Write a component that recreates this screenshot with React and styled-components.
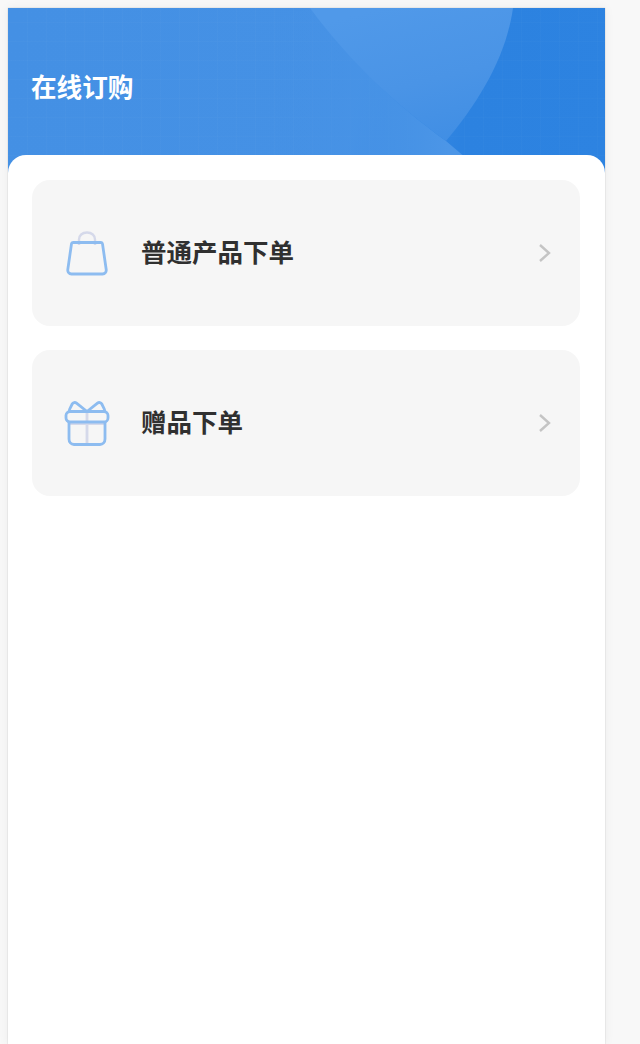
import React from 'react';
import styled, { createGlobalStyle } from 'styled-components';

const GlobalStyle = createGlobalStyle`
    html, body {
        margin: 0;
        padding: 0;
        background: #f8f8f8;
    }

    body {
        padding: 8px 35px 0 8px;
        height: 1044px;
        box-sizing: border-box;
        overflow: hidden;
        font-family: "Noto Sans CJK SC", "Liberation Sans", sans-serif;
    }
`;

const Page = styled.div`
    height: 1036px;
    background: #fff;
    box-shadow: 0 0 1px rgba(0, 0, 0, 0.25), 0 0 10px rgba(0, 0, 0, 0.06);
    overflow: hidden;
`;

const Header = styled.header`
    position: relative;
    height: 167px;
    padding: 0 23px 12px;
    box-sizing: border-box;
    display: flex;
    align-items: center;
    overflow: hidden;
    background:
        repeating-linear-gradient(90deg, rgba(255, 255, 255, 0.015) 0 1px, transparent 1px 19px),
        repeating-linear-gradient(0deg, rgba(255, 255, 255, 0.015) 0 1px, transparent 1px 19px),
        linear-gradient(100deg, #4490e4 0%, #4591e5 58%, #2c82e0 76%, #2d83e1 100%);
`;

const Decoration = styled.svg`
    position: absolute;
    inset: 0;
    width: 100%;
    height: 100%;
`;

const Title = styled.h1`
    position: relative;
    margin: 0;
    font-size: 25.6px;
    line-height: 36px;
    font-weight: 700;
    color: #fff;
`;

const Body = styled.main`
    position: relative;
    margin-top: -20px;
    padding: 25px 25px 25px 24px;
    display: flex;
    flex-direction: column;
    gap: 24px;
    background: #fff;
    border-radius: 18px 18px 0 0;
`;

const Card = styled.a`
    height: 146px;
    padding: 0 28px 0 32px;
    box-sizing: border-box;
    display: flex;
    align-items: center;
    background: #f6f6f6;
    border-radius: 18px;
`;

const IconBox = styled.span`
    width: 46px;
    height: 46px;
    margin-right: 31px;
    flex: none;
    display: flex;
    align-items: center;
    justify-content: center;
`;

const Label = styled.span`
    flex: 1;
    margin-top: -4px;
    font-size: 25.5px;
    line-height: 36px;
    font-weight: 700;
    color: #303030;
`;

const Chevron = styled.svg`
    width: 14px;
    height: 20px;
    flex: none;
`;

const BagIcon = () => (
    <svg width="46" height="46" viewBox="0 0 46 46" fill="none">
        <path d="M15 15V9.5C15 5.5 18.2 2.5 23 2.5S31 5.5 31 9.5V15" stroke="#d5d9ea" strokeWidth="2.4" />
        <path
            d="M9 12.5H37C37.8 12.5 38.4 13 38.5 13.8L42.2 39.5C42.5 42 41 44 38.5 44H7.5C5 44 3.5 42 3.8 39.5L7.5 13.8C7.6 13 8.2 12.5 9 12.5Z"
            stroke="#8dbcf0"
            strokeWidth="2.8"
            strokeLinejoin="round"
        />
    </svg>
);

const GiftIcon = () => (
    <svg width="46" height="46" viewBox="0 0 46 46" fill="none">
        <path d="M23 11V45" stroke="#d5d9ea" strokeWidth="2.8" />
        <path d="M6 24H40" stroke="#d5d9ea" strokeWidth="2.2" />
        <path
            d="M23 11.5L12.5 3.2C11 2 9 2.4 8.2 4L5.5 9.5C5 10.5 5.2 11.5 6 12.5M23 11.5L33.5 3.2C35 2 37 2.4 37.8 4L40.5 9.5C41 10.5 40.8 11.5 40 12.5"
            stroke="#8dbcf0"
            strokeWidth="2.8"
            strokeLinejoin="round"
        />
        <rect x="2" y="11.5" width="42" height="10.5" rx="4" stroke="#8dbcf0" strokeWidth="2.8" />
        <path
            d="M5 22V39C5 42 7 44.5 10 44.5H36C39 44.5 41 42 41 39V22"
            stroke="#8dbcf0"
            strokeWidth="2.8"
        />
    </svg>
);

const items = [
    { label: '普通产品下单', icon: <BagIcon /> },
    { label: '赠品下单', icon: <GiftIcon /> },
];

export default function App() {
    return (
        <>
            <GlobalStyle />
            <Page>
                <Header>
                    <Decoration viewBox="0 0 597 167" preserveAspectRatio="none">
                        <defs>
                            <linearGradient id="lens" x1="0.35" y1="0" x2="0.75" y2="1">
                                <stop offset="0" stopColor="#5099e9" />
                                <stop offset="0.55" stopColor="#4a94e6" />
                                <stop offset="1" stopColor="#408ee4" />
                            </linearGradient>
                            <linearGradient id="band" gradientUnits="userSpaceOnUse" x1="240" y1="0" x2="440" y2="0">
                                <stop offset="0" stopColor="#4591e5" stopOpacity="0" />
                                <stop offset="1" stopColor="#4c96e7" />
                            </linearGradient>
                        </defs>
                        <path d="M240 20L302 0C345 58 390 98 438 133L458 150V167H240Z" fill="url(#band)" />
                        <path d="M302 0C345 58 390 98 438 133C470 95 498 50 505 0Z" fill="url(#lens)" />
                    </Decoration>
                    <Title>在线订购</Title>
                </Header>
                <Body>
                    {items.map(item => (
                        <Card key={item.label}>
                            <IconBox>{item.icon}</IconBox>
                            <Label>{item.label}</Label>
                            <Chevron viewBox="0 0 14 20" fill="none">
                                <path d="M2 2L11 10L2 18" stroke="#c4c4c4" strokeWidth="2.4" />
                            </Chevron>
                        </Card>
                    ))}
                </Body>
            </Page>
        </>
    );
}
